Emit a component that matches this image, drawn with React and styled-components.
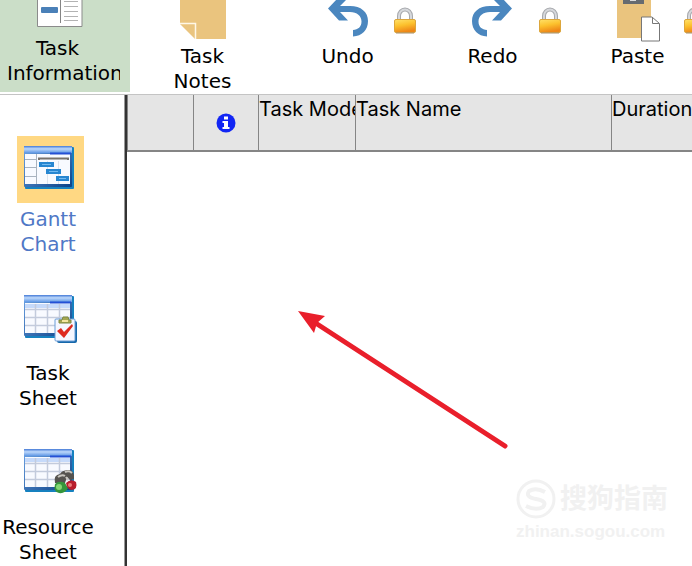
import React, { useState } from 'react';
import styled, { createGlobalStyle } from 'styled-components';

const GlobalStyle = createGlobalStyle`
    * {
        box-sizing: border-box;
    }
    body {
        margin: 0;
        background: #fff;
        color: #000;
        font-family: "DejaVu Sans", Verdana, sans-serif;
    }
    button {
        padding: 0;
        border: 0;
        background: none;
        color: inherit;
        font: inherit;
        cursor: pointer;
    }
`;

function InfoIcon() {
    return (
        <svg width="46" height="28" viewBox="0 0 46 28">
            <path d="M.5-2H45V26.500H.5z" fill="#fff" stroke="#8b8b8b" />
            <path d="M23.500 0V23" stroke="#858585" />
            <rect x="4" y="7" width="17" height="6" rx="1" fill="#4a80b8" />
            <path d="M27 1.500H41M27 6.500H41M27 11.500H41M27 16.500H41M27 20.500H41" stroke="#b3b3b3" />
        </svg>
    );
}

function NotesIcon() {
    return (
        <svg width="46" height="39" viewBox="0 0 46 39">
            <path d="M0 0H46V39H15L0 24z" fill="#eac47e" />
            <path d="M0 23.500H15.500V39" fill="none" stroke="#fff7e6" strokeWidth="1.500" />
        </svg>
    );
}

function UndoIcon() {
    return (
        <svg width="42" height="37" viewBox="0 0 42 37">
            <path d="M1 8.500 10-1H20L13 6H23C34 6 41 12 41 21S35 36 26 36.500V30C31 29.500 34.500 27 34.500 21.500S30 12 23 12H13L21 20.500H12z" fill="#4b87bf" />
        </svg>
    );
}

function RedoIcon() {
    return (
        <svg width="42" height="37" viewBox="0 0 42 37">
            <path d="M40 8.500 31-1H21L28 6H18C7 6 0 12 0 21S6 36 15 36.500V30C10 29.500 6.500 27 6.500 21.500S11 12 18 12H28L20 20.500H29z" fill="#4b87bf" />
        </svg>
    );
}

function PasteIcon() {
    return (
        <svg width="44" height="42" viewBox="0 0 44 42">
            <path d="M1 0H35V38H1z" fill="#eac47e" />
            <path d="M7 0H28V4H7z" fill="#666b70" />
            <path d="M14 0H20V1H14z" fill="#dcdcdc" />
            <path d="M25.500 17H36L43.500 23.500V41H25.500z" fill="#fff" stroke="#777" />
            <path d="M36.500 17V23.500H43" fill="none" stroke="#777" />
        </svg>
    );
}

function LockIcon() {
    return (
        <svg width="22" height="27" viewBox="0 0 22 27">
            <defs>
                <linearGradient id="lockBody" x1="0" y1="0" x2="0.3" y2="1">
                    <stop offset="0" stopColor="#ffe26a" />
                    <stop offset="0.5" stopColor="#fcc12d" />
                    <stop offset="1" stopColor="#ee8617" />
                </linearGradient>
            </defs>
            <path d="M5 15V9A6 6.500 0 0 1 17 9V15" fill="none" stroke="#a6a8ac" strokeWidth="4" />
            <path d="M5 15V9A6 6.500 0 0 1 17 9V15" fill="none" stroke="#d6d8dc" strokeWidth="2" />
            <rect x="0.500" y="12.500" width="21" height="13" rx="1.500" fill="url(#lockBody)" stroke="#dca63c" />
            <path d="M2 26H20" stroke="#a98d6a" />
        </svg>
    );
}

function BlueWindow({ children }) {
    return (
        <svg width="56" height="51" viewBox="0 0 56 51">
            <defs>
                <linearGradient id="titleBar" x1="0" y1="0" x2="0" y2="1">
                    <stop offset="0" stopColor="#4379d6" />
                    <stop offset="0.4" stopColor="#bdd8fb" />
                    <stop offset="1" stopColor="#5d96e4" />
                </linearGradient>
                <linearGradient id="windowEdge" x1="0" y1="0" x2="1" y2="1">
                    <stop offset="0" stopColor="#6fa5e6" />
                    <stop offset="1" stopColor="#0b4187" />
                </linearGradient>
            </defs>
            <rect x="2" y="2" width="49" height="42" rx="1" fill="#1681bf" />
            <rect x="1" y="1" width="48" height="41" rx="1" fill="url(#windowEdge)" />
            <rect x="2" y="9" width="45" height="30" fill="#f8faff" />
            <rect x="1" y="1" width="48" height="7" fill="url(#titleBar)" />
            <path d="M27 8.500H48" stroke="#2450d5" strokeWidth="2" />
            {children}
        </svg>
    );
}

function SheetGrid() {
    return (
        <>
            <path d="M2 10H47V14H2z" fill="#c6dafa" />
            <path d="M2 15.500H47M2 23.500H47M2 31.500H47M12.500 10V39M24.500 10V39M36.500 10V39" stroke="#c3cbdc" strokeWidth="1.500" />
        </>
    );
}

function GanttIcon() {
    return (
        <BlueWindow>
            <path d="M2 14.500H13M2 22.500H13M2 31.500H13M13.500 9V39" stroke="#a9b3bf" />
            <path d="M24.500 16V39M35.500 16V39" stroke="#dce2ec" />
            <path d="M16 15V13.500H45V15" fill="none" stroke="#77736d" strokeWidth="2" />
            <path d="M16 17H31V22H16zM23 24H38V29H23zM33 31H46V36H33z" fill="#2786d1" />
            <path d="M19 19.500H28M26 26.500H35M36 33.500H43" stroke="#73baf0" />
        </BlueWindow>
    );
}

function TaskSheetIcon() {
    return (
        <BlueWindow>
            <SheetGrid />
            <rect x="34" y="27" width="20" height="22" rx="2" fill="#1668ab" />
            <rect x="32" y="25" width="20" height="22" rx="1" fill="#f5f7ff" stroke="#6a9ed8" />
            <path d="M36 29V26H39L40 23H45L46 26H48V29z" fill="#a6a752" stroke="#7d8a44" />
            <path d="M39 27H45" stroke="#f2e6a0" strokeWidth="2" />
            <path d="M34 37 38 34 41 38 49 30 50 32 41 44z" fill="#de2a20" />
        </BlueWindow>
    );
}

function ResourceSheetIcon() {
    return (
        <BlueWindow>
            <SheetGrid />
            <path d="M32 35Q30 27 37 26Q38 23 44 22Q52 21 51 31L47 32 44 29 42 35z" fill="#55534f" />
            <path d="M35 29Q39 26 42 28M42 24Q46 22 49 25M43 29L45 32" fill="none" stroke="#c9c6bf" strokeWidth="2" />
            <path d="M32 36Q36 32 42 35L45 40Q42 46 36 45Q30 44 32 36z" fill="#35963b" />
            <circle cx="36" cy="39" r="3" fill="#84d675" />
            <path d="M43 35Q48 30 53 34Q55 41 49 42Q44 42 43 35z" fill="#b81d2c" />
            <circle cx="47" cy="37" r="2" fill="#ec7b7b" />
        </BlueWindow>
    );
}

const commands = [
    { label: 'Task Notes', icon: <NotesIcon /> },
    { label: 'Undo', icon: <UndoIcon />, locked: true },
    { label: 'Redo', icon: <RedoIcon />, locked: true },
    { label: 'Paste', icon: <PasteIcon />, locked: true },
];

const views = [
    { name: 'Gantt Chart', icon: <GanttIcon /> },
    { name: 'Task Sheet', icon: <TaskSheetIcon /> },
    { name: 'Resource Sheet', icon: <ResourceSheetIcon /> },
];

export default function App() {
    const [view, setView] = useState('Gantt Chart');

    return (
        <Page>
            <GlobalStyle />
            <Toolbar>
                <InfoButton>
                    <InfoIcon />
                    <InfoLabel>Task Information</InfoLabel>
                </InfoButton>
                {commands.map((command) => (
                    <Command key={command.label}>
                        <IconRow>
                            <IconSlot>{command.icon}</IconSlot>
                            {command.locked && <LockSlot><LockIcon /></LockSlot>}
                        </IconRow>
                        <Label>{command.label}</Label>
                    </Command>
                ))}
            </Toolbar>
            <Main>
                <Sidebar>
                    {views.map(({ name, icon }) => (
                        <ViewButton key={name} $active={view === name} onClick={() => setView(name)}>
                            <Tile $active={view === name}>{icon}</Tile>
                            <Label>{name}</Label>
                        </ViewButton>
                    ))}
                </Sidebar>
                <Workspace>
                    <TaskTable>
                        <thead>
                            <tr>
                                <HeadCell $width={66} />
                                <HeadCell $width={65} $middle>
                                    <svg width="20" height="20" viewBox="0 0 20 20">
                                        <circle cx="10" cy="10" r="9.500" fill="#1226f4" />
                                        <path d="M8 3.500H12V6.500H8zM6.500 8H12V14H13.500V16H6.500V14H8V10H6.500z" fill="#fff" />
                                    </svg>
                                </HeadCell>
                                <HeadCell $width={97}>Task Mode</HeadCell>
                                <HeadCell $width={256}>Task Name</HeadCell>
                                <HeadCell>Duration</HeadCell>
                            </tr>
                        </thead>
                    </TaskTable>
                    <Arrow width="212" height="140" viewBox="0 0 212 140">
                        <path d="M16 11 207 135" stroke="#e91f2b" strokeWidth="5" strokeLinecap="round" />
                        <path d="M0 0 27 5 19 12 16 22z" fill="#e91f2b" />
                    </Arrow>
                    <Watermark>
                        <Brand>
                            <svg width="40" height="40" viewBox="0 0 40 40" fill="none" stroke="#f1f1f1">
                                <circle cx="20" cy="20" r="18" strokeWidth="3" />
                                <path d="M29 13Q20 8 13 12Q9 18 20 20Q32 22 27 28Q20 32 10 27" strokeWidth="4" />
                            </svg>
                            <BrandName>搜狗指南</BrandName>
                        </Brand>
                        <Site>zhinan.sogou.com</Site>
                    </Watermark>
                </Workspace>
            </Main>
        </Page>
    );
}

const Page = styled.div`
    display: flex;
    flex-direction: column;
    min-height: 100vh;
    overflow: hidden;
    font-size: 20px;
    line-height: 25px;
`

const Toolbar = styled.header`
    display: flex;
    align-items: flex-start;
    height: 95px;
    border-bottom: 1px solid #c4c4c4;
`

const InfoButton = styled.button`
    display: flex;
    flex: none;
    flex-direction: column;
    align-items: center;
    gap: 8px;
    width: 130px;
    height: 92px;
    padding: 0 10px 0 0;
    background: #cbdec8;
`

const InfoLabel = styled.span`
    width: 113px;
    margin-left: 7px;
    padding-right: 12px;
    overflow: hidden;
`

const Command = styled.button`
    flex: none;
    width: 145px;
`

const IconRow = styled.span`
    display: grid;
    grid-template-columns: 1fr auto 1fr;
    height: 44px;
`

const IconSlot = styled.span`
    display: flex;
    grid-column: 2;
`

const LockSlot = styled.span`
    display: flex;
    justify-content: flex-end;
    padding: 7px 4px 0 0;
`

const Label = styled.span`
    display: block;
    width: min-content;
    margin: 0 auto;
`

const Main = styled.main`
    display: flex;
    flex: 1;
`

const Sidebar = styled.nav`
    display: flex;
    flex: none;
    flex-direction: column;
    gap: 33px;
    width: 127px;
    padding-top: 41px;
    border-right: 2px solid #333;
    box-shadow: inset -1px 0 #999;
`

const ViewButton = styled.button`
    width: 96px;
    color: ${(props) => (props.$active ? '#4f78c6' : '#000')};
`

const Tile = styled.span`
    display: flex;
    align-items: center;
    justify-content: center;
    width: 67px;
    height: 67px;
    margin: 0 0 4px 17px;
    padding-${(props) => (props.$active ? 'top: 2px' : 'bottom: 8px')};
    background: ${(props) => (props.$active ? '#ffd883' : 'transparent')};
`

const Workspace = styled.section`
    position: relative;
    flex: 1;
    min-width: 0;
`

const TaskTable = styled.table`
    width: 100%;
    table-layout: fixed;
    border-collapse: separate;
    border-spacing: 0;
    border-left: 1px solid #858585;
    font-family: Inter, Arial, sans-serif;
    font-size: 20px;
`

const HeadCell = styled.th`
    width: ${(props) => (props.$width ? props.$width + 'px' : 'auto')};
    height: 57px;
    padding: ${(props) => (props.$middle ? '0' : '2px 0 0')};
    overflow: hidden;
    border-right: 1px solid #858585;
    border-bottom: 2px solid #858585;
    background: #e5e5e5;
    font-weight: 400;
    text-align: ${(props) => (props.$middle ? 'center' : 'left')};
    vertical-align: ${(props) => (props.$middle ? 'middle' : 'top')};
    white-space: nowrap;

    svg {
        display: block;
        margin: 0 auto;
    }
    &:last-child {
        border-right: 0;
    }
`

const Arrow = styled.svg`
    position: absolute;
    top: 216px;
    left: 171px;
`

const Watermark = styled.div`
    position: absolute;
    right: 24px;
    bottom: 22px;
    color: #f1f1f1;
    font-family: "Liberation Sans", "Noto Sans CJK SC", sans-serif;
`

const Brand = styled.div`
    display: flex;
    align-items: center;
    gap: 4px;
`

const BrandName = styled.span`
    font-size: 27px;
    font-weight: 700;
`

const Site = styled.div`
    font-size: 17px;
    font-weight: 700;
`
